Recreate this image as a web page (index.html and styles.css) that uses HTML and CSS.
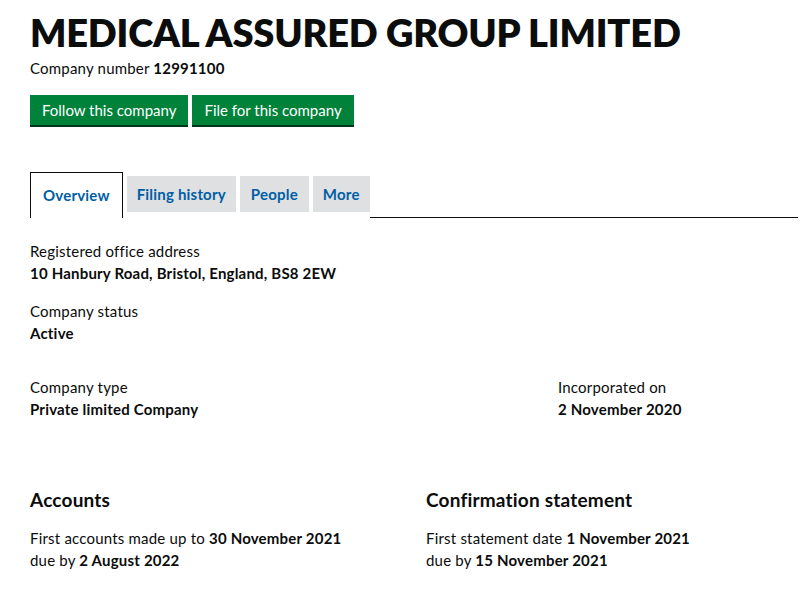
FILE: index.html
```html
<!DOCTYPE html>
<html lang="en">
<head>
<meta charset="utf-8">
<title>MEDICAL ASSURED GROUP LIMITED</title>
<link rel="stylesheet" href="styles.css">
</head>
<body>
<main class="page">
  <h1 class="title">MEDICAL ASSURED GROUP LIMITED</h1>
  <p class="company-number">Company number <strong>12991100</strong></p>
  <div class="actions">
    <a class="button" href="#">Follow this company</a>
    <a class="button" href="#">File for this company</a>
  </div>
  <nav class="tabs">
    <a class="tab tab-active" href="#">Overview</a>
    <a class="tab" href="#">Filing history</a>
    <a class="tab tab-people" href="#">People</a>
    <a class="tab" href="#">More</a>
    <span class="tab-rest"></span>
  </nav>
  <section class="details">
    <dl class="field">
      <dt>Registered office address</dt>
      <dd>10 Hanbury Road, Bristol, England, BS8 2EW</dd>
    </dl>
    <dl class="field">
      <dt>Company status</dt>
      <dd>Active</dd>
    </dl>
    <div class="row-type">
      <dl class="field">
        <dt>Company type</dt>
        <dd>Private limited Company</dd>
      </dl>
      <dl class="field">
        <dt>Incorporated on</dt>
        <dd>2 November 2020</dd>
      </dl>
    </div>
    <div class="row-filings">
      <div class="filing">
        <h2>Accounts</h2>
        <p>First accounts made up to <strong>30 November 2021</strong><br>due by <strong>2 August 2022</strong></p>
      </div>
      <div class="filing">
        <h2>Confirmation statement</h2>
        <p>First statement date <strong>1 November 2021</strong><br>due by <strong>15 November 2021</strong></p>
      </div>
    </div>
  </section>
</main>
</body>
</html>
```
FILE: styles.css
```css
html, body {
  margin: 0;
  padding: 0;
  background: #ffffff;
}
body {
  font-family: Lato, "Liberation Sans", sans-serif;
  color: #0b0c0c;
  letter-spacing: 0.2px;
}
.page {
  padding: 0 6px 0 30px;
}
.title {
  margin: 0;
  padding-top: 11px;
  font-size: 38px;
  line-height: 42px;
  font-weight: 800;
  letter-spacing: -0.2px;
  color: #0b0c0c;
}
.company-number {
  margin: 5px 0 0;
  font-size: 15px;
  line-height: 20px;
  color: #0b0c0c;
}
.company-number strong {
  font-weight: 700;
}
.actions {
  display: flex;
  gap: 4px;
  margin-top: 17px;
}
.button {
  display: block;
  height: 30px;
  line-height: 31px;
  padding: 0 12px;
  background: #00823b;
  color: #ffffff;
  text-decoration: none;
  font-size: 15px;
  letter-spacing: 0;
  box-shadow: 0 2px 0 #003618;
}
.tabs {
  display: flex;
  align-items: flex-start;
  margin-top: 47px;
  gap: 4px;
}
.tab {
  display: block;
  height: 36px;
  line-height: 37px;
  margin-top: 4px;
  padding: 0 10px;
  background: #dee0e2;
  color: #005ea5;
  font-weight: 700;
  font-size: 15px;
  text-decoration: none;
}
.tab-people {
  padding: 0 11px;
}
.tab-active {
  margin-top: 0;
  height: 45px;
  line-height: 45px;
  padding: 0 12px;
  background: #ffffff;
  border: 1px solid #0b0c0c;
  border-bottom: none;
}
.tab-rest {
  flex: 1;
  align-self: stretch;
  border-bottom: 1px solid #0b0c0c;
  margin-left: -4px;
}
.details {
  padding-top: 23px;
}
.field {
  margin: 0 0 18px;
}
.field dt {
  font-size: 15px;
  line-height: 20px;
  color: #0b0c0c;
}
.field dd {
  margin: 2px 0 0;
  font-size: 15px;
  line-height: 20px;
  font-weight: 700;
}
.row-type {
  display: grid;
  grid-template-columns: 528px 1fr;
  margin-top: 34px;
}
.row-filings {
  display: grid;
  grid-template-columns: 396px 1fr;
  margin-top: 51px;
}
.filing h2 {
  margin: 0;
  font-size: 19px;
  line-height: 24px;
  font-weight: 700;
}
.filing p {
  margin: 15px 0 0;
  font-size: 15px;
  line-height: 22px;
}
.filing strong {
  font-weight: 700;
}
```
